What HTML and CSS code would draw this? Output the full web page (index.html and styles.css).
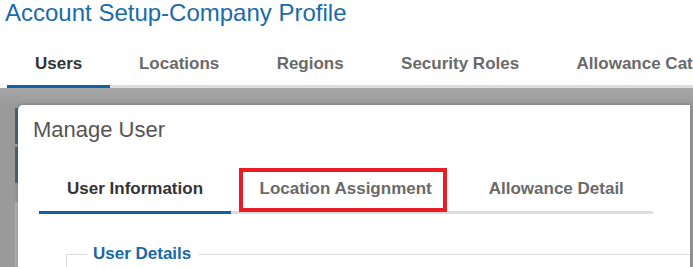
FILE: index.html
```html
<html lang="en">
<head>
	<meta charset="utf-8">
	<title>Account Setup-Company Profile</title>
	<link rel="stylesheet" href="styles.css">
</head>
<body>
	<h1 class="page_title">Account Setup-Company Profile</h1>

	<div class="main_tabs">
		<div class="main_tab active">Users</div>
		<div class="main_tab">Locations</div>
		<div class="main_tab">Regions</div>
		<div class="main_tab">Security Roles</div>
		<div class="main_tab">Allowance Categories</div>
	</div>

	<div class="stage">
		<div class="backdrop_strips">
			<div class="strip"></div>
			<div class="strip"></div>
			<div class="strip_edge"></div>
		</div>

		<div class="modal">
			<h2 class="modal_title">Manage User</h2>

			<div class="modal_tabs">
				<div class="modal_tab active">User Information</div>
				<div class="modal_tab marked">Location Assignment<span class="mark_box"></span></div>
				<div class="modal_tab">Allowance Detail</div>
			</div>

			<fieldset class="details">
				<legend class="details_legend">User Details</legend>
			</fieldset>
		</div>
	</div>
</body>
</html>
```

FILE: styles.css
```css
html, body {
	margin: 0;
	height: 100%;
	overflow: hidden;
}

body {
	font-family: "Liberation Sans", Arial, sans-serif;
	background-color: #FFFFFF;
	display: flex;
	flex-direction: column;
}

.page_title {
	margin: 0;
	padding-left: 5px;
	font-size: 24px;
	line-height: 26px;
	font-weight: normal;
	color: #1B6BA8;
	white-space: nowrap;
}

.main_tabs {
	display: flex;
	margin: 28px 0 0 7px;
	border-bottom: 3px solid #DDDDDD;
	white-space: nowrap;
}

.main_tab {
	padding: 0 28.7px 11px;
	margin-bottom: -3px;
	border-bottom: 3px solid transparent;
	font-size: 17px;
	line-height: 20px;
	font-weight: bold;
	color: #6A6A6A;
	flex-shrink: 0;
}

.main_tab.active {
	padding: 0 28px 11px;
	color: #333333;
	border-bottom-color: #0E64A3;
}

.stage {
	flex: 1;
	display: flex;
	padding-left: 15px;
	background: linear-gradient(#A6A6A6, #9A9A9A 17px);
}

.backdrop_strips {
	width: 3px;
	display: flex;
	flex-direction: column;
	gap: 3px;
	padding-top: 20px;
}

.strip {
	height: 36px;
	background-color: #4C6577;
}

.strip_edge {
	margin-top: 16px;
	flex: 1;
	background-color: #B4B4B4;
}

.modal {
	flex: 1;
	margin: 17px 3px 0 0;
	padding: 12px 0 0 15px;
	background-color: #FFFFFF;
	border-radius: 5px 0 0 0;
	box-shadow: 0 0 4px rgba(0, 0, 0, 0.25);
}

.modal_title {
	margin: 0;
	font-size: 22px;
	line-height: 26px;
	font-weight: normal;
	color: #555555;
}

.modal_tabs {
	display: flex;
	width: 614px;
	margin: 36px 0 0 6px;
	border-bottom: 3px solid #DDDDDD;
	white-space: nowrap;
}

.modal_tab {
	position: relative;
	padding: 0 28.5px 12px;
	margin-bottom: -3px;
	border-bottom: 3px solid transparent;
	font-size: 17px;
	line-height: 20px;
	font-weight: bold;
	color: #6A6A6A;
}

.modal_tab.active {
	padding: 0 28px 12px;
	color: #333333;
	border-bottom-color: #0E64A3;
}

.mark_box {
	position: absolute;
	left: 8px;
	top: -11px;
	width: 208px;
	height: 44px;
	box-sizing: border-box;
	border: 4px solid #EC1C24;
}

.details {
	margin: 30px 0 0 33px;
	padding: 0 0 0 20px;
	border: 1px solid #DDDDDD;
	border-right: none;
	border-bottom: none;
	height: 40px;
}

.details_legend {
	padding: 0 8px 0 6px;
	font-size: 17px;
	line-height: 20px;
	font-weight: bold;
	color: #1A68A5;
}
```
